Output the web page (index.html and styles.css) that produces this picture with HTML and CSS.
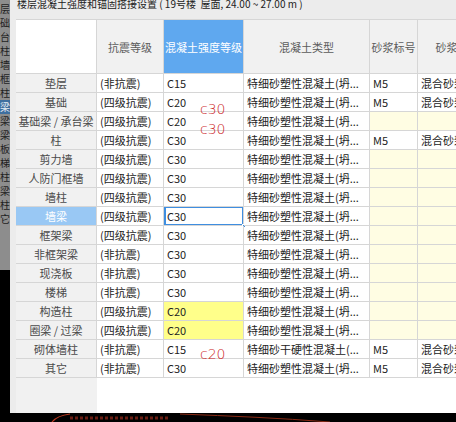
FILE: index.html
```html
<!DOCTYPE html>
<html lang="zh">
<head>
<meta charset="utf-8">
<title>楼层混凝土强度和锚固搭接设置</title>
<link rel="stylesheet" href="styles.css">
</head>
<body>
<div class="screen">
  <div class="side">
    <ul class="side-list">
      <li>垫层</li><li>基础</li><li>承台</li><li>柱</li><li>墙</li><li>框</li><li>墙柱</li>
      <li class="on">墙梁</li><li>框架梁</li><li>架梁</li><li>浇板</li><li>楼梯</li>
      <li>造柱</li><li>过梁</li><li>墙柱</li><li>其它</li>
    </ul>
  </div>
  <div class="window">
    <div class="title">楼层混凝土强度和锚固搭接设置 ( 19号楼&nbsp; 屋面, 24.00 ~ 27.00 m )</div>
    <div class="sheet">
      <div class="row head">
        <div class="c corner"></div>
        <div class="c h">抗震等级</div>
        <div class="c h active">混凝土强度等级</div>
        <div class="c h">混凝土类型</div>
        <div class="c h">砂浆标号</div>
        <div class="c h">砂浆类型</div>
      </div>
      <div class="row"><div class="c rh">垫层</div><div class="c">(非抗震)</div><div class="c">C15</div><div class="c">特细砂塑性混凝土(坍...</div><div class="c">M5</div><div class="c">混合砂浆</div></div>
      <div class="row"><div class="c rh">基础</div><div class="c">(四级抗震)</div><div class="c">C20</div><div class="c">特细砂塑性混凝土(坍...</div><div class="c">M5</div><div class="c">混合砂浆</div></div>
      <div class="row"><div class="c rh">基础梁 / 承台梁</div><div class="c">(四级抗震)</div><div class="c">C20</div><div class="c">特细砂塑性混凝土(坍...</div><div class="c na"></div><div class="c na"></div></div>
      <div class="row"><div class="c rh">柱</div><div class="c">(四级抗震)</div><div class="c">C30</div><div class="c">特细砂塑性混凝土(坍...</div><div class="c">M5</div><div class="c">混合砂浆</div></div>
      <div class="row"><div class="c rh">剪力墙</div><div class="c">(四级抗震)</div><div class="c">C30</div><div class="c">特细砂塑性混凝土(坍...</div><div class="c na"></div><div class="c na"></div></div>
      <div class="row"><div class="c rh">人防门框墙</div><div class="c">(四级抗震)</div><div class="c">C30</div><div class="c">特细砂塑性混凝土(坍...</div><div class="c na"></div><div class="c na"></div></div>
      <div class="row"><div class="c rh">墙柱</div><div class="c">(四级抗震)</div><div class="c">C30</div><div class="c">特细砂塑性混凝土(坍...</div><div class="c na"></div><div class="c na"></div></div>
      <div class="row"><div class="c rh picked">墙梁</div><div class="c">(四级抗震)</div><div class="c focus">C30<span class="handle"></span></div><div class="c">特细砂塑性混凝土(坍...</div><div class="c na"></div><div class="c na"></div></div>
      <div class="row"><div class="c rh">框架梁</div><div class="c">(四级抗震)</div><div class="c">C30</div><div class="c">特细砂塑性混凝土(坍...</div><div class="c na"></div><div class="c na"></div></div>
      <div class="row"><div class="c rh">非框架梁</div><div class="c">(非抗震)</div><div class="c">C30</div><div class="c">特细砂塑性混凝土(坍...</div><div class="c na"></div><div class="c na"></div></div>
      <div class="row"><div class="c rh">现浇板</div><div class="c">(非抗震)</div><div class="c">C30</div><div class="c">特细砂塑性混凝土(坍...</div><div class="c na"></div><div class="c na"></div></div>
      <div class="row"><div class="c rh">楼梯</div><div class="c">(非抗震)</div><div class="c">C30</div><div class="c">特细砂塑性混凝土(坍...</div><div class="c na"></div><div class="c na"></div></div>
      <div class="row"><div class="c rh">构造柱</div><div class="c">(四级抗震)</div><div class="c warn">C20</div><div class="c">特细砂塑性混凝土(坍...</div><div class="c na"></div><div class="c na"></div></div>
      <div class="row"><div class="c rh">圈梁 / 过梁</div><div class="c">(四级抗震)</div><div class="c warn">C20</div><div class="c">特细砂塑性混凝土(坍...</div><div class="c na"></div><div class="c na"></div></div>
      <div class="row"><div class="c rh">砌体墙柱</div><div class="c">(非抗震)</div><div class="c">C15</div><div class="c">特细砂干硬性混凝土(...</div><div class="c">M5</div><div class="c">混合砂浆</div></div>
      <div class="row"><div class="c rh">其它</div><div class="c">(非抗震)</div><div class="c">C30</div><div class="c">特细砂塑性混凝土(坍...</div><div class="c">M5</div><div class="c">混合砂浆</div></div>
      <div class="filler"><div class="filler-head"></div></div>
      <span class="note n1">c30</span>
      <span class="note n2">c30</span>
      <span class="note n3">c20</span>
    </div>
  </div>
</div>
<div class="desk">
  <svg class="desk-art" width="456" height="9" viewBox="0 0 456 9">
    <path d="M52 9 C 56 4, 62 2, 70 1" fill="none" stroke="#c0391f" stroke-width="1.2"/>
    <path d="M70 5 H 170" fill="none" stroke="#6a1d12" stroke-width="3" stroke-dasharray="3 2"/>
    <path d="M180 1 C 230 3, 280 5, 330 9" fill="none" stroke="#8a2a14" stroke-width="1"/>
  </svg>
</div>
</body>
</html>
```
FILE: styles.css
```css
html, body {
  margin: 0;
  padding: 0;
  background: #000;
  overflow: hidden;
}
body {
  width: 456px;
  height: 422px;
  font-family: "Noto Sans CJK SC", "Noto Sans", sans-serif;
}
.screen {
  display: flex;
  height: 413px;
}
.side {
  width: 10px;
  flex: none;
  background: #000;
}
.side-list {
  list-style: none;
  margin: 0;
  padding: 2px 0 0;
  height: 268px;
  background: #8d8d8d;
  overflow: hidden;
}
.side-list li {
  height: 14px;
  line-height: 14px;
  font-size: 10px;
  color: #1e1e1e;
  white-space: nowrap;
  direction: rtl;
  text-align: left;
  overflow: hidden;
}
.side-list li.on {
  background: #3f6f9f;
  color: #e8eef5;
}
.window {
  flex: 1;
  min-width: 0;
  background: #ececec;
  padding-left: 6px;
  display: flex;
  flex-direction: column;
  overflow: hidden;
}
.title {
  height: 19px;
  flex: none;
  font-size: 10px;
  line-height: 8px;
  color: #222;
  white-space: nowrap;
  padding-left: 1px;
}
.sheet {
  position: relative;
  flex: 1;
  display: flex;
  flex-direction: column;
  background: #fff;
  border-top: 1px solid #d6d6d6;
  width: 482px;
}
.row {
  display: grid;
  grid-template-columns: 81px 67px 80px 126px 48px 80px;
  height: 19px;
  flex: none;
}
.row.head {
  height: 54px;
}
.c {
  box-sizing: border-box;
  border-right: 1px solid #d6d6d6;
  border-bottom: 1px solid #d6d6d6;
  font-size: 11px;
  line-height: 18px;
  color: #222;
  padding: 0 3px;
  white-space: nowrap;
  overflow: hidden;
  position: relative;
}
.h {
  background: #f1f1f1;
  color: #5c5c5c;
  display: flex;
  align-items: center;
  justify-content: center;
  padding: 0;
}
.corner {
  background: #fff;
}
.h.active {
  background: #5fa8ef;
  color: #fff;
}
.rh {
  background: #f1f1f1;
  color: #4a4a4a;
  text-align: center;
  padding: 0;
}
.rh.picked {
  background: #99c8f4;
  color: #fff;
}
.na {
  background: #fffde3;
}
.warn {
  background: #ffff8a;
}
.focus {
  overflow: visible;
  box-shadow: inset 2px 1px 0 #3f8ee0, inset -1px -1px 0 #3f8ee0;
}
.handle {
  position: absolute;
  right: -3px;
  bottom: -3px;
  width: 4px;
  height: 4px;
  background: #3f8ee0;
  border: 1px solid #fff;
  box-sizing: border-box;
}
.filler {
  flex: 1;
  display: flex;
}
.filler-head {
  width: 81px;
  background: #f1f1f1;
}
.note {
  position: absolute;
  left: 184px;
  font-family: "DejaVu Sans", sans-serif;
  font-weight: 200;
  font-size: 14px;
  line-height: 15px;
  color: #cc1f1f;
}
.n1 { top: 82px; }
.n2 { top: 102px; }
.n3 { top: 327px; }
.desk {
  height: 9px;
  background: #000;
}
.desk-art {
  display: block;
}
```
